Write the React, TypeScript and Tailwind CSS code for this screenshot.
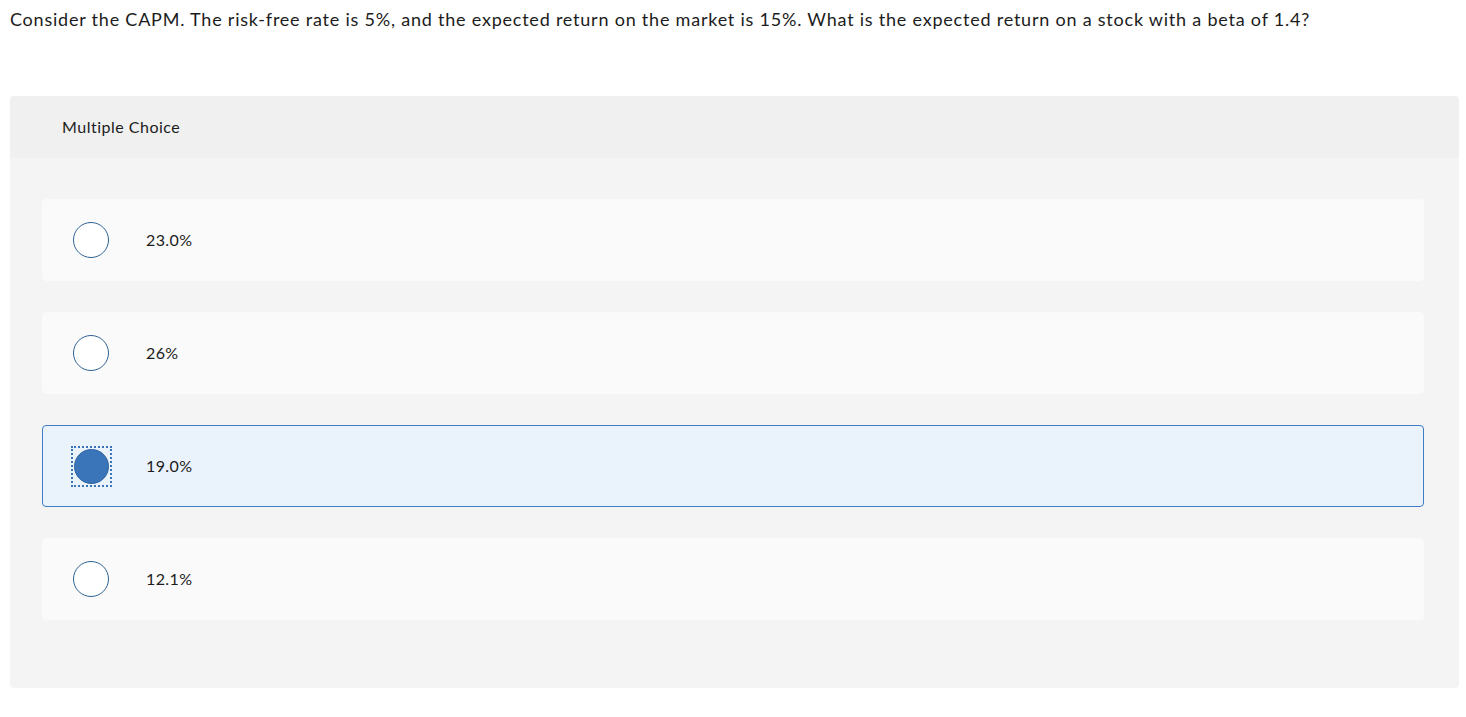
import React from "react";

const options = [
  { label: "23.0%", selected: false },
  { label: "26%", selected: false },
  { label: "19.0%", selected: true },
  { label: "12.1%", selected: false },
];

export default function App() {
  return (
    <div className="min-h-[717px] bg-white text-[#1c1c1c]" style={{ fontFamily: "Lato, 'Open Sans', sans-serif" }}>
      <p className="px-[10px] pt-[7px] text-[18px] leading-[24px] tracking-[0.78px] whitespace-nowrap">
        Consider the CAPM. The risk-free rate is 5%, and the expected return on the market is 15%. What is the expected return on a stock with a beta of 1.4?
      </p>
      <div className="mx-[10px] mt-[65px] w-[1449px] rounded-[4px] bg-[#f4f4f4] overflow-hidden">
        <div className="h-[62px] bg-[#f0f0f0] pl-[52px] flex items-center text-[16px] tracking-[0.5px]">Multiple Choice</div>
        <div className="flex flex-col gap-[31px] pt-[41px] pb-[68px] pl-[32px] pr-[35px]">
          {options.map((o) => (
            <div
              key={o.label}
              className={
                o.selected
                  ? "h-[82px] rounded-[4px] border border-[#3f7cc4] bg-[#eaf2fb] flex items-center"
                  : "h-[82px] rounded-[4px] border border-[#fafafa] bg-[#fafafa] flex items-center"
              }
            >
              <div className="w-[103px] flex items-center justify-center">
                {o.selected ? (
                  <div className="w-[41px] h-[41px] border-2 border-dotted border-[#3a75b8] flex items-center justify-center ml-[-7px]">
                    <div className="w-[35px] h-[35px] rounded-full bg-[#3a75ba] border border-[#2f64a0]" />
                  </div>
                ) : (
                  <div className="w-[36px] h-[36px] rounded-full bg-white border-[1.5px] border-[#2d6192] ml-[-7px]" />
                )}
              </div>
              <span className="text-[16px] tracking-[0.4px]">{o.label}</span>
            </div>
          ))}
        </div>
      </div>
    </div>
  );
}
